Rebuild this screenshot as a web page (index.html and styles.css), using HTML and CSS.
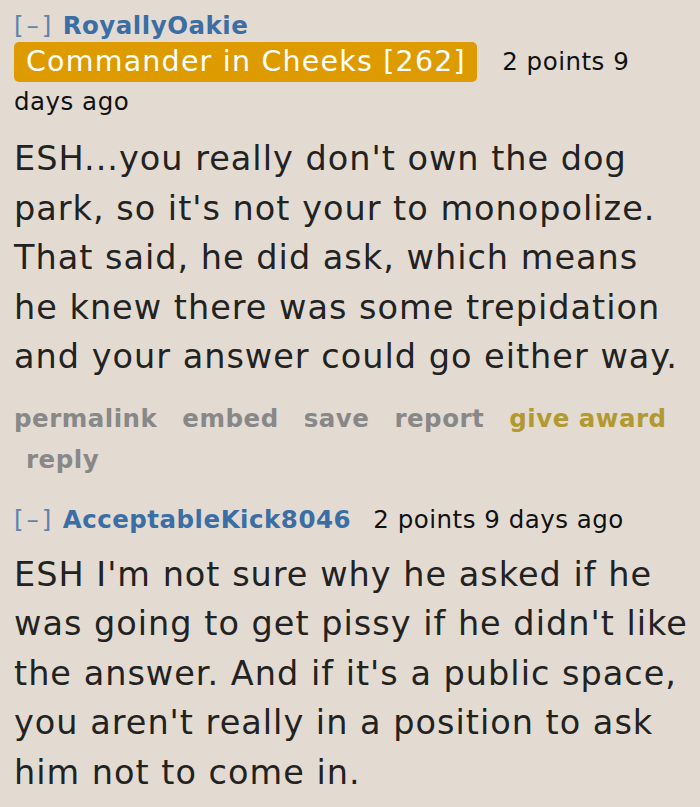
FILE: index.html
```html
<!DOCTYPE html>
<html>
<head>
<meta charset="utf-8">
<link rel="stylesheet" href="styles.css">
</head>
<body>
<div class="comment">
  <p class="tagline">
    <span class="expand">[–]</span> <a class="author">RoyallyOakie</a><br>
    <span class="flair">Commander in Cheeks [262]</span> <span class="score">2 points</span> <span class="time">9 days ago</span>
  </p>
  <div class="md">
    <p>ESH...you really don't own the dog park, so it's not your to monopolize. That said, he did ask, which means he knew there was some trepidation and your answer could go either way.</p>
  </div>
  <ul class="buttons">
    <li>permalink</li>
    <li>embed</li>
    <li>save</li>
    <li>report</li>
    <li class="award">give award</li>
    <li class="wrapped">reply</li>
  </ul>
</div>
<div class="comment second">
  <p class="tagline">
    <span class="expand">[–]</span> <a class="author">AcceptableKick8046</a> <span class="score">2 points</span> <span class="time">9 days ago</span>
  </p>
  <div class="md">
    <p>ESH I'm not sure why he asked if he was going to get pissy if he didn't like the answer. And if it's a public space, you aren't really in a position to ask him not to come in.</p>
  </div>
</div>
</body>
</html>
```
FILE: styles.css
```css
html, body {
  margin: 0;
  padding: 0;
  background: #e3dbd1;
}
body {
  font-family: "DejaVu Sans", Verdana, sans-serif;
  color: #222;
  width: 700px;
  height: 807px;
  overflow: hidden;
}
.comment {
  padding-left: 14px;
  padding-right: 10px;
}
.tagline {
  margin: 0;
  padding-top: 8px;
  font-size: 24.5px;
  letter-spacing: 0.5px;
  line-height: 36px;
  color: #111;
}
.expand {
  color: #5f84b0;
  font-weight: normal;
  letter-spacing: 3px;
}
.author {
  color: #3a6ea5;
  font-weight: bold;
  text-decoration: none;
}
.score {
  margin-left: 14px;
}
.flair {
  display: inline-block;
  background: #dd9b00;
  color: #fff;
  font-size: 28.5px;
  letter-spacing: 1.2px;
  line-height: 40px;
  padding: 0 11px 0 12px;
  border-radius: 5px;
  margin: -3px 3px 2px 0;
  vertical-align: -1px;
}
.md {
  padding-top: 14px;
}
.md p {
  margin: 0;
  font-size: 33.5px;
  letter-spacing: 1px;
  line-height: 49.5px;
}
.buttons {
  list-style: none;
  margin: 0;
  padding: 16px 0 0 0;
  display: flex;
  flex-wrap: wrap;
  column-gap: 25px;
  font-size: 24.5px;
  letter-spacing: 0.5px;
  font-weight: bold;
  line-height: 41px;
  color: #888;
}
.buttons .award {
  color: #b29930;
}
.buttons .wrapped {
  margin-left: 12px;
}
.second .tagline {
  padding-top: 22px;
}
.second .md {
  padding-top: 12px;
}
```
